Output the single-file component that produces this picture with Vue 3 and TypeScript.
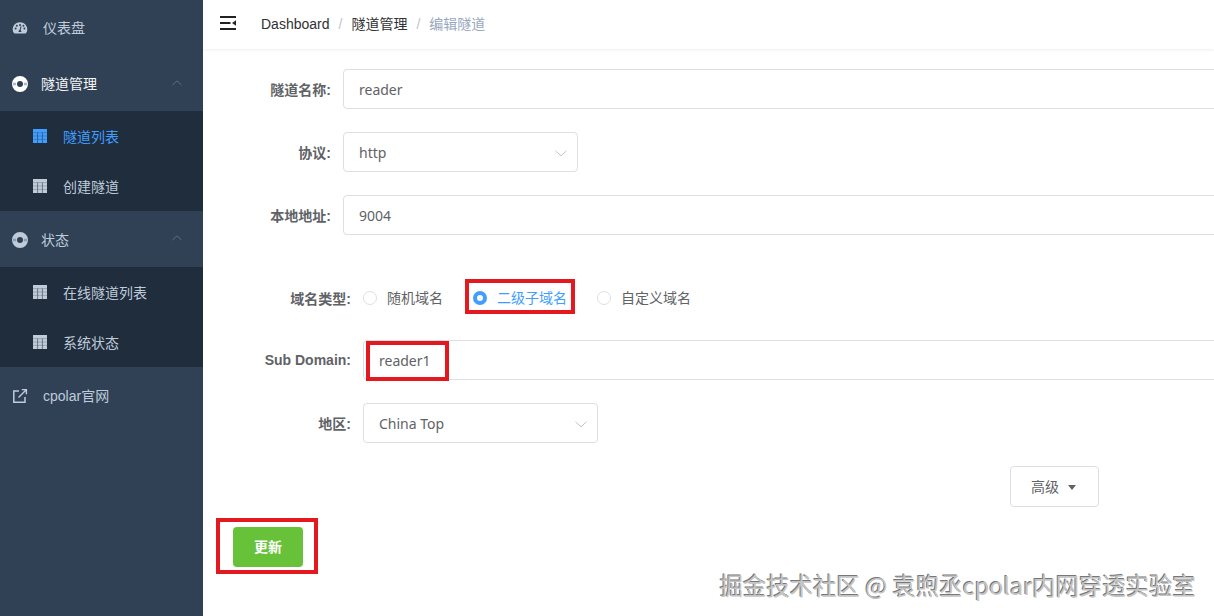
<script setup lang="ts">
interface SubItem { label: string; active?: boolean }
interface MenuGroup { label: string; strong?: boolean; children: SubItem[] }

const groups: MenuGroup[] = [
  { label: '隧道管理', strong: true, children: [{ label: '隧道列表', active: true }, { label: '创建隧道' }] },
  { label: '状态', children: [{ label: '在线隧道列表' }, { label: '系统状态' }] },
]
const radios = [
  { label: '随机域名', checked: false },
  { label: '二级子域名', checked: true },
  { label: '自定义域名', checked: false },
]
</script>

<template>
  <div class="page">
    <aside class="sidebar">
      <div class="menu-row">
        <svg class="ico" viewBox="0 0 16 16" width="16" height="16">
          <path fill="#bfcbd9" fill-rule="evenodd" d="M8 2.2C3.8 2.2.7 5.4.7 9.4c0 1.5.4 2.7 1.2 3.7.2.3.5.5.9.5h10.4c.4 0 .7-.2.9-.5.8-1 1.2-2.2 1.2-3.7 0-4-3.1-7.2-7.3-7.2ZM8 4a1 1 0 1 1 0 2 1 1 0 0 1 0-2ZM3.6 9.6a1 1 0 1 1 0-2 1 1 0 0 1 0 2Zm1.2-2.9a1 1 0 1 1 0-2 1 1 0 0 1 0 2Zm4.6 5.4H6.6c-.2-1.1.4-2 1-2.4l1.1-3.6.9.3-1 3.6c.5.5.9 1.3.8 2.1Zm2-5.4a1 1 0 1 1 0-2 1 1 0 0 1 0 2Zm1 2.9a1 1 0 1 1 0-2 1 1 0 0 1 0 2Z" />
        </svg>
        <span class="menu-text plain">仪表盘</span>
      </div>

      <section v-for="g in groups" :key="g.label">
        <div class="menu-row group-row">
          <svg class="ico" viewBox="0 0 16 16" width="16" height="16">
            <circle cx="8" cy="8" r="5.5" fill="none" :stroke="g.strong ? '#ffffff' : '#bfcbd9'" stroke-width="5" />
            <path d="M1.1 8h3M11.9 8h3" :stroke="g.strong ? '#a9b8c9' : '#8b9db1'" stroke-width="2.4" fill="none" />
          </svg>
          <span class="menu-text" :class="{ strong: g.strong }">{{ g.label }}</span>
          <svg class="chev" viewBox="0 0 12 12" width="12" height="12">
            <path d="M1.5 8 6 3.8 10.5 8" fill="none" stroke="#5d6e83" stroke-width="1" />
          </svg>
        </div>
        <div class="submenu">
          <div v-for="c in g.children" :key="c.label" class="sub-row" :class="{ active: c.active }">
            <svg class="table-ico" viewBox="0 0 14 14" width="14" height="14">
              <rect width="14" height="14" fill="currentColor" />
              <path d="M4.6 3.6V14M9.4 3.6V14" stroke="#1f2d3d" stroke-width=".8" stroke-opacity=".65" fill="none" />
              <path d="M0 3.6h14M0 7h14M0 10.4h14" stroke="#1f2d3d" stroke-width=".7" stroke-opacity=".35" fill="none" />
            </svg>
            <span>{{ c.label }}</span>
          </div>
        </div>
      </section>

      <div class="menu-row link-row">
        <svg class="ico" viewBox="0 0 16 16" width="16" height="16">
          <path d="M7 3H1.8v11.2H13V9" fill="none" stroke="#bfcbd9" stroke-width="1.5" />
          <path d="M6.5 9.5 14 2M9.8 1.6h4.6v4.6" fill="none" stroke="#bfcbd9" stroke-width="1.4" />
        </svg>
        <span class="menu-text plain">cpolar官网</span>
      </div>
    </aside>

    <main class="main">
      <header class="topbar">
        <svg class="hamburger" viewBox="0 0 16 14" width="16" height="14">
          <path fill="#222" d="M0 0h16v2H0zM0 6h10.5v2H0zM0 12h16v2H0zM16 4.2v5.6L12 7z" />
        </svg>
        <nav class="crumbs">
          <span>Dashboard</span><i>/</i><span>隧道管理</span><i>/</i><span class="current">编辑隧道</span>
        </nav>
      </header>

      <form class="form" @submit.prevent>
        <div class="field">
          <label class="label">隧道名称:</label>
          <div class="input full">reader</div>
        </div>
        <div class="field">
          <label class="label">协议:</label>
          <div class="input select">http
            <svg viewBox="0 0 14 14" width="14" height="14"><path d="M1.5 4.8 7 9.8l5.5-5" fill="none" stroke="#c0c4cc" stroke-width="1" /></svg>
          </div>
        </div>
        <div class="field">
          <label class="label">本地地址:</label>
          <div class="input full">9004</div>
        </div>

        <div class="field wide radio-field">
          <label class="label">域名类型:</label>
          <div class="radios">
            <div v-for="r in radios" :key="r.label" class="radio" :class="{ on: r.checked }">
              <span class="dot"></span><span class="radio-text">{{ r.label }}</span>
            </div>
          </div>
        </div>
        <div class="field wide">
          <label class="label latin">Sub Domain:</label>
          <div class="input full">reader1</div>
        </div>
        <div class="field wide">
          <label class="label">地区:</label>
          <div class="input select">China Top
            <svg viewBox="0 0 14 14" width="14" height="14"><path d="M1.5 4.8 7 9.8l5.5-5" fill="none" stroke="#c0c4cc" stroke-width="1" /></svg>
          </div>
        </div>

        <div class="advanced-row">
          <button class="advanced" type="button">高级<span class="caret"></span></button>
        </div>
        <button class="update" type="button">更新</button>
      </form>

      <span class="mark mark-radio"></span>
      <span class="mark mark-sub"></span>
      <span class="mark mark-btn"></span>
      <div class="watermark">掘金技术社区 @ 袁煦丞cpolar内网穿透实验室</div>
    </main>
  </div>
</template>

<style>
html, body { margin: 0; overflow: hidden; background: #fff; }
</style>

<style scoped>
.page {
  display: flex;
  width: 1214px;
  height: 616px;
  overflow: hidden;
  font-family: "Liberation Sans", "Noto Sans CJK SC", sans-serif;
  font-size: 14px;
  color: #606266;
}
.sidebar {
  flex: 0 0 203px;
  background: #304156;
  color: #bfcbd9;
}
.menu-row {
  position: relative;
  display: flex;
  align-items: center;
  box-sizing: border-box;
  height: 56px;
  padding-left: 12px;
}
.group-row { height: 55px; }
section:last-of-type .group-row { height: 56px; padding-top: 2px; }
.ico { flex: none; }
.menu-text { margin-left: 13px; margin-bottom: 2px; }
.menu-text.plain { margin-left: 15px; }
.menu-text.strong { color: #f4f6f8; }
.chev { position: absolute; right: 20px; top: 21px; }
.submenu { background: #1f2d3d; }
.sub-row {
  display: flex;
  align-items: center;
  height: 50px;
  padding-left: 33px;
}
.sub-row span { margin-left: 16px; margin-bottom: 1px; }
.sub-row.active { color: #409eff; }
.table-ico { flex: none; }
.link-row { height: 57px; }

.main {
  position: relative;
  flex: 1;
  min-width: 0;
  overflow: hidden;
}
.topbar {
  display: flex;
  align-items: center;
  box-sizing: border-box;
  height: 49px;
  padding-left: 17px;
  box-shadow: 0 1px 3px rgba(0, 21, 41, .07);
}
.hamburger { margin-top: -3px; }
.crumbs {
  margin-left: 25px;
  margin-top: -4px;
  color: #303133;
  white-space: nowrap;
}
.crumbs i {
  margin: 0 9px;
  font-style: normal;
  color: #c0c4cc;
}
.crumbs .current { color: #97a8be; }

.form { padding-top: 20px; }
.field {
  display: flex;
  align-items: center;
  margin-bottom: 23px;
}
.label {
  flex: none;
  width: 128px;
  margin-right: 12px;
  text-align: right;
  font-weight: 700;
  color: #606266;
}
.wide .label { width: 148px; }
.input {
  position: relative;
  flex: none;
  box-sizing: border-box;
  height: 40px;
  padding-left: 15px;
  line-height: 40px;
  border: 1px solid #dcdfe6;
  border-radius: 4px;
  font-family: "Noto Sans", "Noto Sans CJK SC", sans-serif;
  color: #606266;
}
.input.full { width: 1000px; }
.input.select { width: 235px; }
.input.select svg { position: absolute; right: 9px; top: 13px; }

.radio-field { margin-top: 43px; margin-bottom: 22px; height: 40px; }
.radios { display: flex; align-items: center; }
.radio { display: flex; align-items: center; margin-right: 30px; }
.radio-text { margin-bottom: 2px; }
.dot {
  box-sizing: border-box;
  width: 14px;
  height: 14px;
  margin-right: 10px;
  border: 1px solid #dcdfe6;
  border-radius: 50%;
}
.radio.on { color: #409eff; }
.radio.on .dot { border: 4.5px solid #409eff; background: #fff; }

.advanced-row {
  display: flex;
  justify-content: flex-end;
  padding-right: 115px;
}
.advanced {
  box-sizing: border-box;
  width: 89px;
  height: 41px;
  padding: 0 2px 2px 0;
  background: #fff;
  border: 1px solid #dcdfe6;
  border-radius: 4px;
  font: inherit;
  color: #606266;
}
.caret {
  display: inline-block;
  margin-left: 9px;
  vertical-align: 2px;
  border-left: 4.5px solid transparent;
  border-right: 4.5px solid transparent;
  border-top: 5px solid #606266;
}
.update {
  display: block;
  width: 70px;
  height: 40px;
  margin: 20px 0 0 30px;
  padding: 0 0 2px;
  background: #67c23a;
  border: 0;
  border-radius: 4px;
  font: inherit;
  font-weight: 700;
  color: #fff;
}

.mark {
  position: absolute;
  box-sizing: border-box;
  border: 4px solid #e3191f;
}
.mark-radio { left: 262px; top: 279px; width: 110px; height: 35px; }
.mark-sub { left: 163px; top: 341px; width: 83px; height: 40px; }
.mark-btn { left: 13px; top: 518px; width: 102px; height: 56px; }

.watermark {
  position: absolute;
  right: 18px;
  top: 569px;
  font-family: "Noto Sans CJK SC", sans-serif;
  font-size: 23.4px;
  line-height: 32px;
  white-space: nowrap;
  color: #c4c4c4;
  text-shadow: -1px -1px 0 #777;
}
</style>
